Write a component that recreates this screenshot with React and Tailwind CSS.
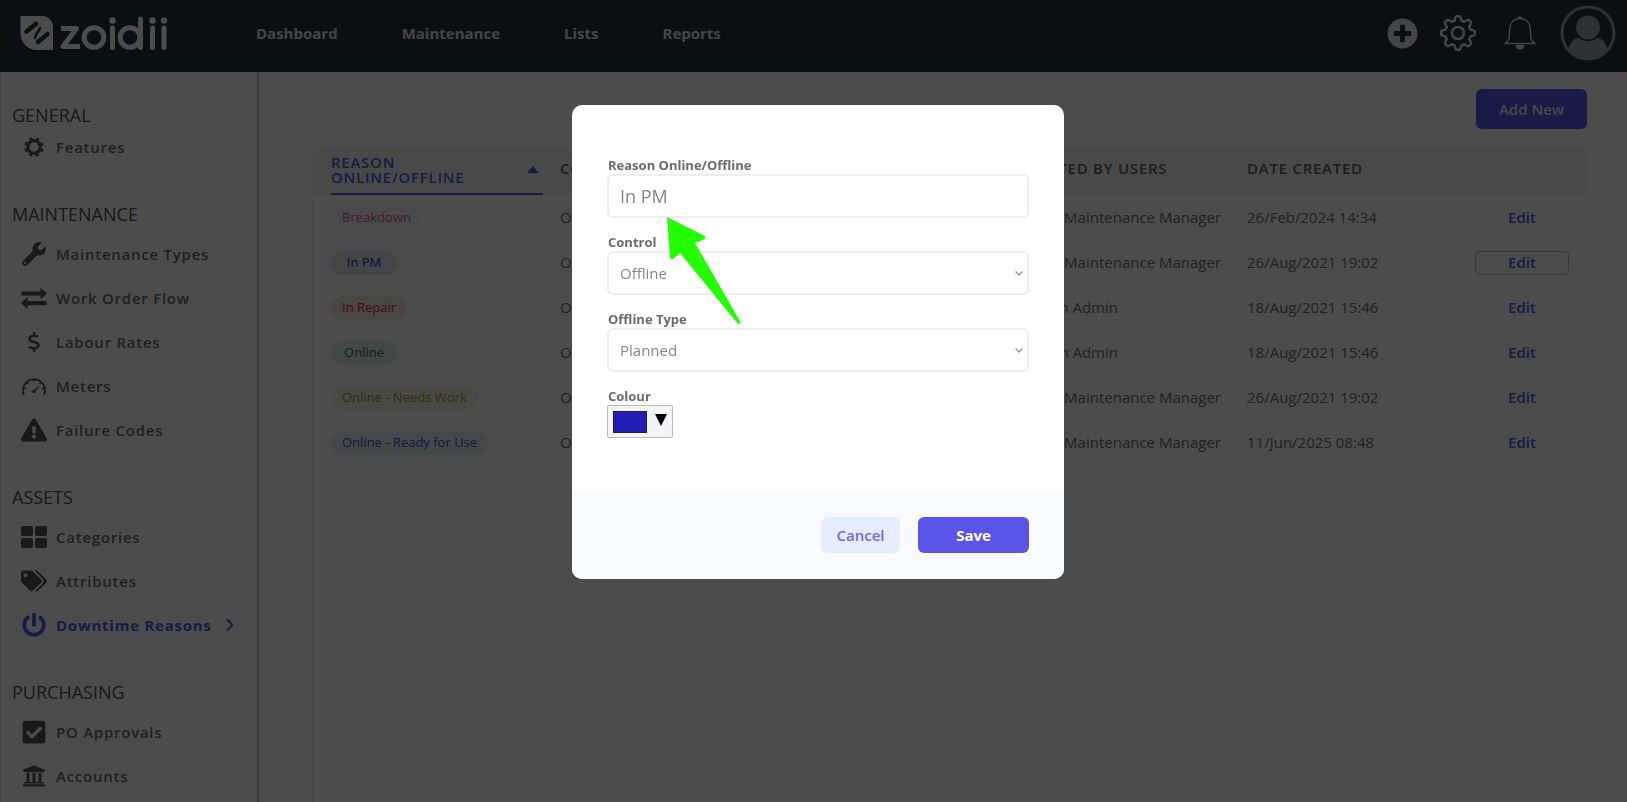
import React, { useState } from 'react';
import {
  FaWrench,
  FaExclamationTriangle,
  FaTags,
  FaPowerOff,
  FaCheckSquare,
  FaUniversity,
  FaPlusCircle,
} from 'react-icons/fa';
import { FaDollarSign } from 'react-icons/fa6';
import { ChevronRight } from 'lucide-react';

// --- Icons that the icon packages don't carry ---
const CogRing = ({ className }) => (
  <svg viewBox="0 0 24 24" className={className} fill="none" stroke="currentColor">
    <circle cx="12" cy="12" r="7.6" strokeWidth="3.8" />
    <circle cx="12" cy="12" r="10.4" strokeWidth="3" strokeDasharray="3.8 4.368" strokeDashoffset="-2.2" />
  </svg>
);

const SwapArrows = ({ className }) => (
  <svg viewBox="0 0 26 26" className={className} fill="currentColor">
    <path d="M.5 6.500h19V3.800q0-1.300 1-.4l5 4.400q.6.700 0 1.400l-5 4.300q-1 .8-1-.4v-2.500H.5zM25.500 16h-19v-2.700q0-1.300-1-.4l-5 4.400q-.6.700 0 1.400l5 4.300q1 .8 1-.4V20.300h19z" />
  </svg>
);

const Tiles = ({ className }) => (
  <svg viewBox="0 0 26 26" className={className} fill="currentColor">
    <rect x="0" y="2" width="12" height="10" rx="2" />
    <rect x="14" y="2" width="12" height="10" rx="2" />
    <rect x="0" y="14" width="12" height="10" rx="2" />
    <rect x="14" y="14" width="12" height="10" rx="2" />
  </svg>
);

const Gauge = ({ className }) => (
  <svg viewBox="0 0 24 24" className={className} fill="none" stroke="currentColor" strokeLinecap="round">
    <path d="M1.800 20.500A11 11 0 1 1 22.200 20.500" strokeWidth="1.800" />
    <path d="M12 5.500v1.500M5.200 8.500l1 1M2 14.500h1.500M22 14.500h-1.500M18.800 8.500l-1 1M12 17.500l4.500-4.500" strokeWidth="1.500" />
    <circle cx="12" cy="17.500" r="1.800" fill="currentColor" stroke="none" />
  </svg>
);

// Eight rounded teeth around a ring
const gearPoints = Array.from({ length: 160 }, (_, i) => {
  const angle = (i / 160) * Math.PI * 2;
  const wave = Math.max(-1, Math.min(1, 1.7 * Math.cos(8 * angle)));
  const r = 14.8 + 2 * wave;
  return `${(18 + r * Math.sin(angle)).toFixed(2)},${(18 - r * Math.cos(angle)).toFixed(2)}`;
}).join(' ');

const HeaderGear = ({ className }) => (
  <svg viewBox="0 0 36 36" className={className} fill="none" stroke="currentColor" strokeLinejoin="round">
    <polygon points={gearPoints} strokeWidth="2.400" />
    <circle cx="18" cy="18" r="6" strokeWidth="2.600" />
  </svg>
);

const HeaderBell = ({ className }) => (
  <svg viewBox="0 0 34 36" className={className} fill="none" stroke="currentColor" strokeWidth="1.300">
    <path d="M2 28.500c3.500-2.500 4.500-4 4.500-11.500C6.500 8 10 3.500 17 3.500S27.500 8 27.500 17c0 7.500 1 9 4.500 11.500z" />
    <path d="M15.500 3.500a1.500 1.500 0 0 1 3 0" />
    <path d="M12.500 30h9a4.500 4.500 0 0 1-9 0z" fill="currentColor" stroke="none" />
  </svg>
);

const Avatar = ({ className }) => (
  <svg viewBox="0 0 56 56" className={className}>
    <circle cx="28" cy="28" r="26" fill="none" stroke="currentColor" strokeWidth="3" />
    <circle cx="28" cy="22.500" r="12" fill="currentColor" />
    <path d="M8.500 45c1-7 5-11 10-12.500 6 5 13 5 19 0 5 1.500 9 5.500 10 12.500a26 26 0 0 1-39 0z" fill="currentColor" />
  </svg>
);

const Logo = () => (
  <svg viewBox="0 0 150 36" className="h-9 w-[150px] shrink-0 text-white" role="img" aria-label="zoidii">
    <path d="M.5 1H22a11 11 0 0 1 11 11v23H17A16.500 16.500 0 0 1 .5 18.500z" fill="currentColor" />
    <g stroke="#28323f" strokeLinecap="round" fill="none">
      <path d="M6.500 16.500 16 9M18 27l9.500-8" strokeWidth="4.500" />
      <path d="M20 13c-1 4-5 6-5 10" strokeWidth="2.500" />
    </g>
    <g fill="none" stroke="currentColor" strokeWidth="5">
      <path d="M41 13.500h15.500L43 31.500h17" strokeLinejoin="round" />
      <circle cx="74" cy="22.500" r="9.800" />
      <circle cx="110" cy="22.500" r="9.800" />
      <path d="M120.500 4v28.500M92.500 13v19.500M132.500 13v19.500M144 13v19.500" strokeLinecap="round" />
    </g>
    <g fill="currentColor">
      <circle cx="92.500" cy="5.500" r="3.200" />
      <circle cx="132.500" cy="5.500" r="3.200" />
      <circle cx="144" cy="5.500" r="3.200" />
    </g>
  </svg>
);

const topLinks = ['Dashboard', 'Maintenance', 'Lists', 'Reports'];

const menu = [
  {
    title: 'GENERAL',
    compact: true,
    items: [{ name: 'Features', icon: CogRing, size: 'size-5' }],
  },
  {
    title: 'MAINTENANCE',
    items: [
      { name: 'Maintenance Types', icon: FaWrench, size: 'size-6' },
      { name: 'Work Order Flow', icon: SwapArrows, size: 'size-[26px]' },
      { name: 'Labour Rates', icon: FaDollarSign, size: 'size-5' },
      { name: 'Meters', icon: Gauge, size: 'size-6' },
      { name: 'Failure Codes', icon: FaExclamationTriangle, size: 'size-[26px]' },
    ],
  },
  {
    title: 'ASSETS',
    items: [
      { name: 'Categories', icon: Tiles, size: 'size-[26px]' },
      { name: 'Attributes', icon: FaTags, size: 'size-[26px]' },
      { name: 'Downtime Reasons', icon: FaPowerOff, size: 'size-6', active: true },
    ],
  },
  {
    title: 'PURCHASING',
    items: [
      { name: 'PO Approvals', icon: FaCheckSquare, size: 'size-[26px]' },
      { name: 'Accounts', icon: FaUniversity, size: 'size-6' },
    ],
  },
];

const reasons = [
  { name: 'Breakdown', control: 'Offline', user: 'Demo Maintenance Manager', date: '26/Feb/2024 14:34', pill: 'bg-[#fbf3f9] text-[#d45cae]' },
  { name: 'In PM', control: 'Offline', user: 'Demo Maintenance Manager', date: '26/Aug/2021 19:02', pill: 'bg-[#e6e7f4] text-[#2a22b8]', focused: true },
  { name: 'In Repair', control: 'Offline', user: 'System Admin', date: '18/Aug/2021 15:46', pill: 'bg-[#faeaec] text-[#d4283e]' },
  { name: 'Online', control: 'Online', user: 'System Admin', date: '18/Aug/2021 15:46', pill: 'bg-[#e6eee9] text-[#2b6e45]' },
  { name: 'Online - Needs Work', control: 'Online', user: 'Demo Maintenance Manager', date: '26/Aug/2021 19:02', pill: 'bg-[#f3f4e6] text-[#99a010]' },
  { name: 'Online - Ready for Use', control: 'Online', user: 'Demo Maintenance Manager', date: '11/Jun/2025 08:48', pill: 'bg-[#e8edf7] text-[#1d5fd0]' },
];

const Header = () => (
  <header className="flex h-[72px] shrink-0 items-center bg-[#28323f] pb-1.5 pl-5 pr-[11px] text-[#e6e7e8]">
    <Logo />
    <nav className="ml-[86px] flex gap-16 text-[15px] font-bold">
      {topLinks.map((link) => (
        <a key={link} href="#">{link}</a>
      ))}
    </nav>
    <div className="ml-auto flex items-center">
      <button type="button" aria-label="Add" className="mr-[22px]"><FaPlusCircle className="size-[31px]" /></button>
      <button type="button" aria-label="Settings" className="mr-[27px]"><HeaderGear className="size-9" /></button>
      <button type="button" aria-label="Notifications" className="mr-[23px]"><HeaderBell className="h-9 w-[34px]" /></button>
      <button type="button" aria-label="Account"><Avatar className="size-14 text-[#9ea3aa]" /></button>
    </div>
  </header>
);

const Sidebar = () => (
  <aside className="w-[259px] shrink-0 border-l border-r-2 border-l-[#dddddd] border-r-[#c8cccf] pt-[25px]">
    {menu.map((group) => (
      <section key={group.title} className={group.compact ? 'mb-[35px]' : 'mb-[27px]'}>
        <h2 className="flex h-9 items-center pl-[11px] text-lg font-medium text-[#505050]">{group.title}</h2>
        <ul>
          {group.items.map(({ name, icon: Icon, size, active }) => (
            <li key={name}>
              <a
                href="#"
                className={`flex items-center pl-5 text-[15px] tracking-wider ${group.compact ? 'h-7' : 'h-11'} ${active ? 'font-bold text-[#5a54e8]' : 'font-semibold text-[#6a6a6a]'}`}
              >
                <span className={`mr-2.5 flex w-[25px] justify-center ${active ? '' : 'text-[#555555]'}`}>
                  <Icon className={`${size} shrink-0`} />
                </span>
                {name}
                {active && <ChevronRight className="ml-2 size-5" strokeWidth={2.5} />}
              </a>
            </li>
          ))}
        </ul>
      </section>
    ))}
  </aside>
);

const ReasonTable = () => (
  <div className="mt-[17px] flex-1 rounded-t-lg border-x border-[#f2f2f4]">
    <table className="w-full table-fixed text-left text-[15px] text-[#6e6e6e]">
      <thead className="bg-[#f3f4f9] tracking-wider text-[#5f5f5f]">
        <tr className="h-[49px]">
          <th className="w-[246px] pl-[17px] pr-[17px] text-[#5a54e8]">
            <div className="flex h-[49px] items-center justify-between border-b-2 border-[#5a54e8] pr-1 font-semibold leading-[15px]">
              <span>REASON<br />ONLINE/OFFLINE</span>
              <svg viewBox="0 0 12 7" className="h-[7px] w-3" fill="currentColor"><path d="M0 7 6 0l6 7z" /></svg>
            </div>
          </th>
          <th className="pb-1 font-semibold">CONTROL</th>
          <th className="w-[229px] pb-1 font-semibold">CREATED BY USERS</th>
          <th className="w-[228px] pb-1 font-semibold">DATE CREATED</th>
          <th className="w-[111px]"></th>
        </tr>
      </thead>
      <tbody>
        {reasons.map((row) => (
          <tr key={row.name} className="h-[45px]">
            <td className="pl-[17px]">
              <span className={`flex h-6 w-fit min-w-[66px] items-center justify-center rounded-full px-[11px] text-[13px] ${row.pill}`}>
                {row.name}
              </span>
            </td>
            <td>{row.control}</td>
            <td>{row.user}</td>
            <td>{row.date}</td>
            <td>
              <button
                type="button"
                className={`flex h-6 w-[94px] items-center justify-center rounded-sm font-semibold text-[#5a54e8] ${row.focused ? 'border border-[#bbbbbb]' : ''}`}
              >
                Edit
              </button>
            </td>
          </tr>
        ))}
      </tbody>
    </table>
  </div>
);

const labelStyle = 'block h-[17px] pl-px text-[13px] font-bold leading-[17px] text-[#6b6b6b]';
const fieldStyle = 'block h-11 w-full appearance-none rounded-md border-2 border-[#eeeeee] bg-white px-[11px] text-[#858585] outline-none';

const SelectField = ({ id, label, value, options, onChange }) => (
  <div className="mb-4">
    <label htmlFor={id} className={labelStyle}>{label}</label>
    <div className="relative">
      <select id={id} value={value} onChange={(e) => onChange(e.target.value)} className={`${fieldStyle} text-[15px]`}>
        {options.map((option) => (
          <option key={option}>{option}</option>
        ))}
      </select>
      <svg viewBox="0 0 8 5" className="pointer-events-none absolute right-1.5 top-5 h-[5px] w-2 text-[#9a9a9a]" fill="none" stroke="currentColor" strokeWidth="1.400">
        <path d="M.6.6 4 4 7.400.6" />
      </svg>
    </div>
  </div>
);

const ReasonModal = () => {
  const [reason, setReason] = useState('In PM');
  const [control, setControl] = useState('Offline');
  const [offlineType, setOfflineType] = useState('Planned');

  return (
    <div className="fixed inset-0 flex items-start justify-center bg-black/70 pl-[9px] pt-[105px]">
      <form role="dialog" aria-modal="true" className="relative w-[492px] overflow-hidden rounded-[10px] bg-white" onSubmit={(e) => e.preventDefault()}>
        <div className="px-[35px] pb-[53px] pt-[52px]">
          <div className="mb-4">
            <label htmlFor="reason" className={labelStyle}>Reason Online/Offline</label>
            <input id="reason" value={reason} onChange={(e) => setReason(e.target.value)} className={`${fieldStyle} text-lg`} />
          </div>
          <SelectField id="control" label="Control" value={control} options={['Offline', 'Online']} onChange={setControl} />
          <SelectField id="offline-type" label="Offline Type" value={offlineType} options={['Planned', 'Unplanned']} onChange={setOfflineType} />
          <label htmlFor="colour" className={labelStyle}>Colour</label>
          <button id="colour" type="button" className="flex h-[33px] w-[66px] items-center gap-2 rounded-xs border border-[#bbbbbb] bg-[#f3f4f6] pl-[5px]">
            <span className="h-[22px] w-[34px] border border-[#222222] bg-[#241db8]" />
            <svg viewBox="0 0 12 12" className="mb-1 size-3" fill="#000000"><path d="M0 0h12L6 12z" /></svg>
          </button>
        </div>
        <div className="flex items-center justify-end gap-[18px] bg-[#f9fafc] px-[35px] pb-[26px] pt-[26px] text-[15px]">
          <button type="button" className="h-9 w-[79px] rounded-md bg-[#e5edff] font-semibold text-[#6f6be6]">Cancel</button>
          <button type="submit" className="h-9 w-[111px] rounded-md bg-[#5a55e8] font-bold text-white">Save</button>
        </div>
      </form>
      {/* Pointer that guides the user to the reason field */}
      <svg viewBox="0 0 76 108" className="pointer-events-none absolute left-1/2 top-[217px] ml-[-148px] h-[108px] w-[76px]" fill="#22ff00">
        <path d="M1 0 39 19Q40 22 37 23L29 26 75 106 72 107 14 36 7 42Q4 43 4 40Z" />
      </svg>
    </div>
  );
};

const App = () => {
  return (
    <div className="flex h-screen flex-col overflow-hidden bg-white font-['Open_Sans','Noto_Sans',sans-serif]">
      <Header />
      <div className="flex min-h-0 flex-1">
        <Sidebar />
        <main className="flex flex-1 flex-col pl-[54px] pr-10 pt-[17px]">
          <button type="button" className="h-10 w-[111px] self-end rounded-md bg-[#5a55e8] text-[15px] font-semibold text-[#f0f0ff]">Add New</button>
          <ReasonTable />
        </main>
      </div>
      <ReasonModal />
    </div>
  );
};

export default App;
